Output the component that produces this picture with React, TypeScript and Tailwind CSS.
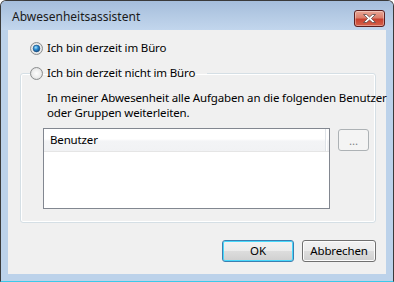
import React from 'react';

function Radio({ checked, id }: { checked?: boolean; id: string }) {
  return (
    <svg width="13" height="13" viewBox="0 0 13 13" className="shrink-0">
      <defs>
        <radialGradient id={`${id}-bg`} cx="0.5" cy="0.5" r="0.6">
          <stop offset="0" stopColor="#fdfdfd" />
          <stop offset="0.6" stopColor="#ececec" />
          <stop offset="1" stopColor="#c9cacb" />
        </radialGradient>
        <radialGradient id={`${id}-dot`} cx="0.4" cy="0.35" r="0.7">
          <stop offset="0" stopColor="#a9e4fb" />
          <stop offset="0.45" stopColor="#2a8bd2" />
          <stop offset="1" stopColor="#12457a" />
        </radialGradient>
      </defs>
      <circle cx="6.5" cy="6.5" r="6" fill={`url(#${id}-bg)`} stroke="#8c8e8f" strokeWidth="1" />
      {checked && <circle cx="6.5" cy="6.5" r="3.4" fill={`url(#${id}-dot)`} stroke="#1b4f80" strokeWidth="0.6" />}
    </svg>
  );
}

function CloseButton() {
  return (
    <div className="w-[31px] h-[17px] mt-[9px] rounded-[3px] border border-[#5c1f1f] bg-[linear-gradient(#e9a796_0%,#dc7f6c_45%,#c8412f_55%,#d6624b_100%)] shadow-[inset_0_0_0_1px_rgba(255,255,255,0.35)] flex items-center justify-center">
      <svg width="13" height="9" viewBox="0 0 13 9">
        <polygon
          points="0.5,0.5 3.6,0.5 6.5,3 9.4,0.5 12.5,0.5 8.4,4.5 12.5,8.5 9.4,8.5 6.5,6 3.6,8.5 0.5,8.5 4.6,4.5"
          fill="#ffffff"
          stroke="#5a4a4a"
          strokeWidth="0.8"
          strokeLinejoin="round"
        />
      </svg>
    </div>
  );
}

function Win7Button({ label, focused }: { label: string; focused?: boolean }) {
  return (
    <button
      className={
        focused
          ? 'h-[22px] w-[72px] rounded-[3px] border border-[#3c7fb1] bg-[linear-gradient(#f2f2f2_0%,#ebebeb_50%,#dddddd_50%,#cfcfcf_100%)] shadow-[inset_0_0_0_1px_#48d8fb] text-[11.5px] leading-[16px] tracking-[-0.15px] text-black'
          : 'h-[22px] w-[74px] rounded-[3px] border border-[#707070] bg-[linear-gradient(#f2f2f2_0%,#ebebeb_50%,#dddddd_50%,#cfcfcf_100%)] shadow-[inset_0_0_0_1px_#fcfcfc] text-[11.5px] leading-[16px] tracking-[-0.15px] text-black'
      }
    >
      {label}
    </button>
  );
}

export default function App() {
  return (
    <div className="w-[394px] h-[282px] font-['Noto_Sans',sans-serif] text-[11.5px] tracking-[-0.15px] text-black bg-[#bcd2ea] border-x border-t border-[#3a3a3a] border-b border-b-[#3cc9ea] rounded-t-[6px] flex flex-col overflow-hidden">
      {/* Title bar */}
      <div className="h-[29px] shrink-0 flex items-start justify-between pl-[11px] pr-[8px] bg-[linear-gradient(#a5bddb_0%,#b4cae4_50%,#c2d6ed_100%)]">
        <span className="mt-[8px] leading-[16px] text-[12px] tracking-normal text-[#1a1a1a]">Abwesenheitsassistent</span>
        <CloseButton />
      </div>

      {/* Client area */}
      <div className="mx-[7px] h-[244px] shrink-0 bg-[#f0f0f0] flex flex-col pt-[10px] whitespace-nowrap">
        <label className="flex items-center h-[16px] pl-[22px] gap-[4px]">
          <Radio checked id="r1" />
          <span>Ich bin derzeit im Büro</span>
        </label>

        <fieldset className="min-w-0 mt-[9px] ml-[12px] mr-[10px] px-0 pt-[9px] pb-[13px] border border-[#d5dfe5] rounded-[3px] shadow-[inset_0_0_0_1px_#ffffff]">
          <legend className="ml-[9px] w-[177px] h-[16px] flex items-center gap-[4px] p-0">
            <Radio id="r2" />
            <span>Ich bin derzeit nicht im Büro</span>
          </legend>

          <p className="pl-[26px] leading-[15px]">
            In meiner Abwesenheit alle Aufgaben an die folgenden Benutzer
            <br />
            oder Gruppen weiterleiten.
          </p>

          <div className="mt-[8px] pl-[22px] flex items-start gap-[8px]">
            <div className="w-[287px] h-[81px] border border-[#828790] bg-white">
              <div className="h-[23px] flex border-b border-[#e5e5e5] bg-[linear-gradient(#ffffff_0%,#ffffff_45%,#f3f4f6_55%,#f1f2f4_100%)]">
                <div className="w-[282px] flex items-center pl-[6px] border-r border-[#dfe3e8] shadow-[1px_0_0_#ffffff]">
                  Benutzer
                </div>
              </div>
            </div>
            <button className="mt-[1px] w-[31px] h-[22px] rounded-[3px] border border-[#adb2b5] bg-[#f4f4f4] text-[#838383] leading-[16px] pt-[2px]">
              ...
            </button>
          </div>
        </fieldset>

        <div className="mt-[17px] pr-[10px] flex justify-end gap-[8px]">
          <Win7Button label="OK" focused />
          <Win7Button label="Abbrechen" />
        </div>
      </div>
    </div>
  );
}
